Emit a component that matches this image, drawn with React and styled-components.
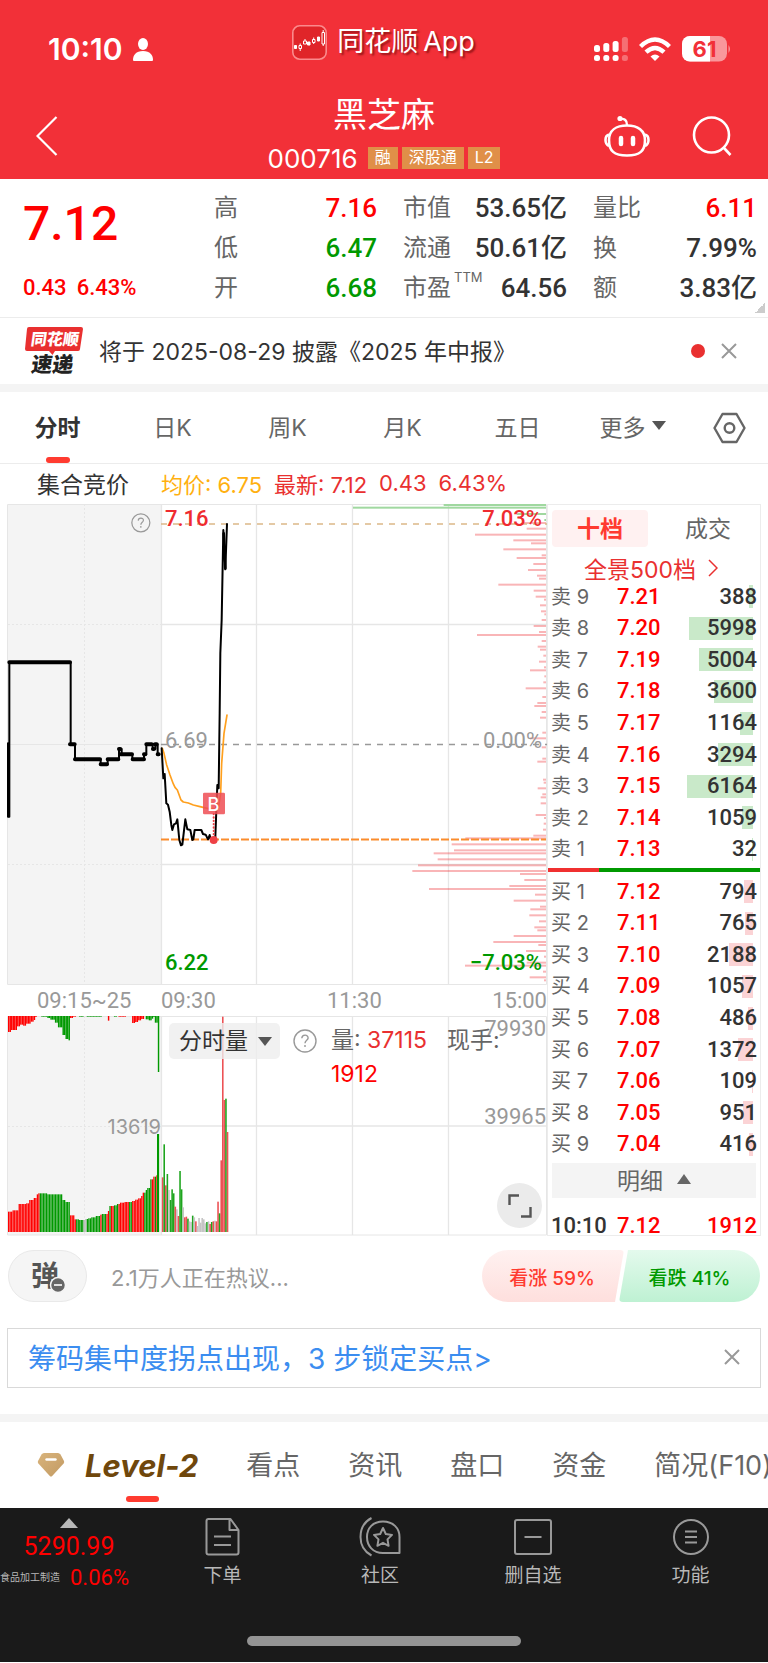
import React from "react";
import styled, { createGlobalStyle, css } from "styled-components";

const GlobalStyle = createGlobalStyle`
  * { box-sizing: border-box; }
  body { margin: 0; background: #fff; overflow-x: hidden; }
  button, select, a { font: inherit; color: inherit; text-decoration: none; }
  button, select { border: 0; background: none; padding: 0; margin: 0; cursor: pointer; white-space: nowrap; }
  svg { display: block; }
`;

const SANS = `Inter, "Noto Sans CJK SC", sans-serif`;
const NUM = `Roboto, "Noto Sans CJK SC", sans-serif`;

const C = {
  brand: "#f23038",
  up: "#ff0000",
  down: "#009900",
  soft: "#e93030",
  ink: "#333333",
  label: "#666666",
  mute: "#999999",
  line: "#ececec",
};
const tone = { up: C.up, down: C.down, ink: C.ink };

const Page = styled.div`
  font-family: ${SANS};
  color: ${C.ink};
  background: #fff;
  overflow: hidden;
`;

/* ---------- header ---------- */
const Header = styled.header`
  background: ${C.brand};
  color: #fff;
  height: 179px;
`;
const StatusBar = styled.div`
  display: grid;
  grid-template-columns: 1fr auto 1fr;
  height: 92px;
  padding: 0 37px 0 48px;
`;
const Clock = styled.div`
  display: flex;
  align-items: center;
  gap: 10px;
  height: 98px;
  font-size: 30px;
  font-weight: 600;
`;
const AppBadge = styled.div`
  display: flex;
  align-items: center;
  gap: 10px;
  height: 84px;
  padding-right: 12px;
  font-size: 27px;
  line-height: 36px;
  text-shadow: 2px 2px 2px rgba(90, 0, 0, 0.6);
`;
const AppName = styled.span`
  display: flex;
  gap: 5px;
`;
const Signals = styled.div`
  display: flex;
  align-items: center;
  justify-content: flex-end;
  gap: 11px;
  height: 98px;
`;
const TitleBar = styled.div`
  display: grid;
  grid-template-columns: 1fr auto 1fr;
  align-items: center;
  height: 87px;
  padding: 0 36px;
`;
const IconButton = styled.button`
  display: inline-flex;
  align-items: center;
  justify-content: center;
`;
const TitleActions = styled.div`
  display: flex;
  justify-content: flex-end;
  align-items: center;
  gap: 42px;
`;
const Back = styled.div`
  display: flex;
`;
const StockName = styled.div`
  text-align: center;
`;
const Name = styled.h1`
  margin: 0;
  font-size: 34px;
  line-height: 45px;
  font-weight: 400;
`;
const CodeRow = styled.div`
  display: flex;
  align-items: center;
  gap: 4px;
  height: 42px;
  font-size: 26px;
`;
const Code = styled.span`
  margin-right: 6px;
`;
const Tag = styled.span`
  background: #e08f48;
  font-size: 16px;
  line-height: 21px;
  height: 22px;
  padding: 0 7px;
`;

/* ---------- quote ---------- */
const Quote = styled.section`
  display: grid;
  grid-template-columns: 165fr 163fr 164fr 164fr;
  column-gap: 26px;
  height: 139px;
  padding: 9px 11px 0 23px;
  border-bottom: 1px solid ${C.line};
  background: linear-gradient(135deg, transparent 50%, #ccc 50%) no-repeat right 3px bottom 4px / 10px 10px;
`;
const PriceBox = styled.div`
  color: ${C.up};
  font-family: ${NUM};
  font-weight: 500;
`;
const BigPrice = styled.div`
  font-size: 48px;
  line-height: 72px;
`;
const Change = styled.div`
  display: flex;
  gap: 10px;
  font-size: 22px;
  line-height: 56px;
`;
const Stats = styled.dl`
  margin: 0;
`;
const Stat = styled.div`
  display: flex;
  justify-content: space-between;
  line-height: 40px;
  font-size: 24px;
`;
const StatLabel = styled.dt`
  color: ${C.label};
  white-space: nowrap;
`;
const Sup = styled.sup`
  font-size: 13px;
  line-height: 1;
  vertical-align: 14px;
  margin-left: 3px;
`;
const StatValue = styled.dd`
  margin: 0;
  font-family: ${NUM};
  font-weight: 500;
  font-size: 26px;
  color: ${(p) => tone[p.$tone]};
`;

/* ---------- news ---------- */
const News = styled.section`
  display: flex;
  align-items: center;
  height: 66px;
  padding: 0 31px 0 24px;
`;
const NewsText = styled.a`
  flex: 1;
  margin-left: 16px;
  padding-bottom: 3px;
  font-size: 23px;
  color: ${C.ink};
`;
const Dot = styled.span`
  width: 14px;
  height: 14px;
  border-radius: 50%;
  background: #e93030;
  margin-right: 16px;
`;
const Band = styled.div`
  height: 8px;
  background: #f4f4f4;
`;

/* ---------- period tabs ---------- */
const Periods = styled.nav`
  display: grid;
  grid-template-columns: repeat(6, 115fr) 78fr;
  justify-items: center;
  height: 72px;
  border-bottom: 1px solid ${C.line};
`;
const Tab = styled.button`
  display: flex;
  align-items: center;
  gap: 6px;
  position: relative;
  height: 100%;
  padding-bottom: 4px;
  font-size: ${(p) => (p.$big ? 27 : 23)}px;
  color: ${(p) => (p.$on ? C.ink : C.label)};
  font-weight: ${(p) => (p.$on ? 700 : 400)};
  ${(p) =>
    p.$on &&
    css`
      &::after {
        content: "";
        position: absolute;
        left: 50%;
        bottom: 0;
        width: 24px;
        height: 6px;
        margin-left: -12px;
        border-radius: 3px;
        background: #ff3b30;
      }
    `}
`;
const Caret = styled.span`
  border: 7px solid transparent;
  border-bottom-width: 0;
  border-top: 9px solid #555;
`;

const Info = styled.div`
  display: flex;
  align-items: center;
  height: 40px;
  padding: 0 0 2px 37px;
  font-size: 22px;
`;
const Auction = styled.span`
  width: 124px;
  font-size: 23px;
`;
const Metric = styled.span`
  color: ${(p) => p.$color};
  margin-right: 12px;
`;

/* ---------- charts ---------- */
const Market = styled.main`
  display: grid;
  grid-template-columns: minmax(0, 540fr) minmax(0, 214fr);
  padding: 0 7px;
`;
const Chart = styled.svg`
  width: 100%;
  height: auto;
  font-family: ${NUM};
`;
const ChartColumn = styled.div`
  min-width: 0;
`;
const Axis = styled.div`
  display: grid;
  grid-template-columns: 154fr 166fr 110fr 110fr;
  height: 31px;
  line-height: 32px;
  font-family: ${NUM};
  font-size: 22px;
  color: ${C.mute};
  span:first-child { padding-left: 30px; }
  span:last-child { text-align: right; }
`;
const Volume = styled.div`
  position: relative;
`;
const VolumeTools = styled.div`
  position: absolute;
  top: 7px;
  left: 162px;
  right: 0;
  display: flex;
  align-items: flex-start;
`;
const Picker = styled.label`
  display: flex;
  align-items: center;
  flex: none;
  width: 111px;
  height: 36px;
  padding-left: 10px;
  border-radius: 5px;
  background: rgba(238, 238, 238, 0.8);
  font-size: 23px;
  ${Caret} { margin-left: 10px; pointer-events: none; }
  select { appearance: none; width: 69px; height: 36px; color: ${C.ink}; font-size: 23px; }
`;
const HelpButton = styled(IconButton)`
  width: 26px;
  height: 36px;
  margin: 0 14px 0 13px;
`;
const Readings = styled.div`
  display: flex;
  flex-wrap: wrap;
  column-gap: 20px;
  font-size: 23px;
  line-height: 34px;
  color: ${C.label};
  b { font-weight: 400; color: ${C.soft}; }
  em { font-style: normal; color: ${C.up}; }
`;
const Expand = styled.button`
  position: absolute;
  right: 5px;
  bottom: 8px;
  width: 45px;
  height: 45px;
  border-radius: 50%;
  background: #ebebeb;
  display: flex;
  align-items: center;
  justify-content: center;
`;

/* ---------- order book ---------- */
const Book = styled.aside`
  display: flex;
  flex-direction: column;
  min-width: 0;
  border: 1px solid ${C.line};
  padding-top: 5px;
`;
const BookTabs = styled.div`
  display: grid;
  grid-template-columns: 96px 1fr;
  padding: 0 4px;
  gap: 12px;
`;
const BookTab = styled.button`
  height: 37px;
  padding-bottom: 4px;
  border-radius: 4px;
  font-size: 23px;
  color: ${(p) => (p.$on ? "#ff3b30" : C.label)};
  font-weight: ${(p) => (p.$on ? 700 : 400)};
  background: ${(p) => (p.$on ? "#fff1f1" : "transparent")};
`;
const FullBook = styled.a`
  display: flex;
  align-items: center;
  justify-content: center;
  gap: 12px;
  height: 34px;
  padding: 7px 6px 0 0;
  font-size: 23px;
  && { color: ${C.soft}; }
`;
const Levels = styled.table`
  display: flex;
  flex: ${(p) => (p.$last ? "none" : "1 1 0")};
  width: 100%;
  border-spacing: 0;
  tbody { display: flex; flex-direction: column; flex: 1; }
`;
const Level = styled.tr`
  flex: 1;
  display: grid;
  grid-template-columns: 66px 60px 1fr;
  align-items: center;
  padding: ${(p) => (p.$last ? "19px 3px 0" : "0 3px")};
  line-height: ${(p) => (p.$last ? 18 : 26)}px;
  font-family: ${NUM};
  font-size: 22px;
  font-weight: 500;
  th, td { padding: 0; text-align: left; }
`;
const Side = styled.th`
  font-family: ${SANS};
  font-size: 20px;
  font-weight: 400;
  color: ${C.label};
`;
const Time = styled.td`
  white-space: nowrap;
  color: ${C.ink};
`;
const Price = styled.td`
  color: ${C.up};
`;
const Qty = styled.td`
  && { text-align: right; }
  color: ${(p) => (p.$up ? C.up : C.ink)};
  background: linear-gradient(${(p) => p.$color || "transparent"} 0 0) no-repeat right 4px center / ${(p) => p.$bar || 0}px 23px;
`;
const Ratio = styled.div`
  height: 4px;
  margin: 3px 0 4px;
  background: linear-gradient(90deg, #f03030 24%, #009900 24%);
`;
const Detail = styled.button`
  display: flex;
  align-items: center;
  justify-content: center;
  gap: 14px;
  height: 35px;
  margin: 3px 4px 0;
  padding-bottom: 3px;
  background: #f4f4f4;
  color: ${C.label};
  font-size: 23px;
`;
const UpCaret = styled.span`
  border: ${(p) => p.$w || 7}px solid transparent;
  border-top-width: 0;
  border-bottom: 10px solid ${(p) => p.$color || "#666"};
`;

/* ---------- discussion ---------- */
const Talk = styled.section`
  display: flex;
  align-items: center;
  height: 92px;
  padding: 0 8px 12px;
`;
const Danmu = styled.button`
  width: 79px;
  height: 52px;
  border-radius: 26px;
  border: 1px solid #e9e9e9;
  background: #f5f5f5;
  display: flex;
  align-items: center;
  justify-content: center;
`;
const TalkText = styled.a`
  flex: 1;
  margin-left: 24px;
  font-size: 22px;
  && { color: ${C.mute}; }
`;
const Vote = styled.button`
  height: 52px;
  font-size: 19px;
  font-weight: 500;
  ${(p) =>
    p.$up
      ? css`
          width: 142px;
          padding-right: 2px;
          color: #ff3b30;
          border-radius: 26px 4px 4px 26px;
          background: linear-gradient(#fff1f0, #fedfdd);
          clip-path: polygon(0 0, 100% 0, calc(100% - 9px) 100%, 0 100%);
        `
      : css`
          width: 141px;
          margin-left: -5px;
          color: ${C.down};
          border-radius: 4px 26px 26px 4px;
          background: linear-gradient(#e4faed, #bef1d3);
          clip-path: polygon(9px 0, 100% 0, 100% 100%, 0 100%);
        `}
`;
const Promo = styled.section`
  display: flex;
  align-items: center;
  justify-content: space-between;
  height: 60px;
  margin: 0 7px 26px;
  padding: 0 20px 2px;
  border: 1px solid #d9d9d9;
`;
const PromoLink = styled.a`
  font-size: 28px;
  && { color: #3b8df0; }
`;

/* ---------- bottom ---------- */
const Sections = styled.nav`
  display: flex;
  align-items: center;
  height: 86px;
  padding-left: 37px;
  gap: 48px;
  white-space: nowrap;
`;
const LevelTab = styled.button`
  position: relative;
  display: flex;
  align-items: center;
  gap: 20px;
  height: 100%;
  font-size: 31px;
  font-weight: 700;
  font-style: italic;
  color: #6f470c;
  &::after {
    content: "";
    position: absolute;
    left: 89px;
    bottom: 6px;
    width: 33px;
    height: 6px;
    border-radius: 3px;
    background: #ff3b30;
  }
`;
const Footer = styled.footer`
  background: #1a1a1a;
  color: #b8b8b8;
  height: 154px;
`;
const Dock = styled.div`
  display: grid;
  grid-template-columns: 138fr 169fr 146fr 160fr 155fr;
  height: 128px;
`;
const Index = styled.a`
  display: flex;
  flex-direction: column;
  align-items: center;
  padding-top: 10px;
  font-family: ${NUM};
`;
const IndexValue = styled.span`
  color: ${C.up};
  font-size: 25px;
  line-height: 38px;
`;
const IndexRow = styled.span`
  display: flex;
  align-items: center;
  gap: 10px;
  width: 100%;
  font-size: 10px;
  line-height: 24px;
  white-space: nowrap;
  b { font-weight: 400; font-size: 22px; color: ${C.up}; }
`;
const DockItem = styled.button`
  display: flex;
  flex-direction: column;
  align-items: center;
  padding-top: 9px;
  font-size: 19px;
  line-height: 38px;
  svg { width: 42px; height: 40px; }
`;
const HomeBar = styled.div`
  width: 274px;
  height: 10px;
  margin: 0 auto;
  border-radius: 5px;
  background: #949494;
`;

/* ---------- icons ---------- */
const Cross = ({ size = 16 }) => (
  <svg width={size} height={size} viewBox="0 0 16 16" stroke="#999" strokeWidth="2" fill="none">
    <path d="M1 1 15 15M15 1 1 15" />
  </svg>
);
const Help = () => (
  <svg width="24" height="24" viewBox="0 0 24 24" fill="none" stroke="#999" strokeWidth="1.4">
    <circle cx="12" cy="12" r="11" />
    <path d="M8.8 9.3c.2-4.4 6.6-4 6.3-.2-.2 2.2-3.1 2.3-3.1 5.2M12 16v2" />
  </svg>
);
const Person = () => (
  <svg width="20" height="23" viewBox="0 0 20 23" fill="#fff">
    <ellipse cx="10" cy="6" rx="5" ry="6" />
    <path d="M0 22c0-5 3-9 10-9s10 4 10 9q0 1-1 1H1q-1 0-1-1Z" />
  </svg>
);
const AppIcon = () => (
  <svg width="35" height="35" viewBox="0 0 35 35">
    <rect x=".8" y=".8" width="33.4" height="33.4" rx="7" fill="#e02529" stroke="#fb8a8c" strokeWidth="1.6" />
    <g fill="#fff" stroke="#fff">
      <path d="M2.5 20.5h2v3h-2zM15.5 17h2.500v3h-2.500zM25.500 12h2v4h-2z" />
      <path fill="none" d="M7 20.500h2.500v3H7zM8.200 18.500v2M8.200 23.500v2.500M11.500 16h3v3h-3zM13 14v2M20.500 14.500h2.500v3h-2.500zM21.700 12.500v2M21.700 17.500v1.500M30 7.500h2.500V19H30zM31.200 5v2.500M31.200 19v2" />
    </g>
  </svg>
);
const Cells = () => (
  <svg width="34" height="24" viewBox="0 0 34 24" fill="#fff">
    {[8, 6, 4, 0].map((y, i) => (
      <g key={y} opacity={i === 3 ? 0.3 : 1}>
        <rect x={i * 9.3} y={y} width="6" height={15 - y} rx="2.500" />
        <rect x={i * 9.3} y="18" width="6" height="6" rx="2.500" />
      </g>
    ))}
  </svg>
);
const Wifi = () => (
  <svg width="32" height="25" viewBox="0 0 32 25" fill="none" stroke="#fff" strokeWidth="4.400">
    <path d="M1.500 9.500Q16-4.500 30.500 9.500" />
    <path d="M7 15.200q9-8.500 18 0" />
    <path d="M11.500 19.500q4.500-4 9 0L16 24Z" fill="#fff" stroke="none" />
  </svg>
);
const Battery = () => (
  <svg width="49" height="26" viewBox="0 0 49 26">
    <rect width="45" height="25.500" rx="8" fill="#f9979b" />
    <path d="M8 0h20v25.500H8a8 8 0 0 1-8-8V8a8 8 0 0 1 8-8Z" fill="#fff" />
    <path d="M46.500 9q3 4 0 8Z" fill="#f9979b" />
    <text x="22.500" y="20.500" textAnchor="middle" fontFamily="Inter, sans-serif" fontWeight="700" fontSize="22" fill="#f23038">61</text>
  </svg>
);
const BackIcon = () => (
  <svg width="22" height="40" viewBox="0 0 22 40" fill="none" stroke="#fff" strokeWidth="2.200">
    <path d="M20.500 1 1.500 20l19 19" />
  </svg>
);
const Robot = () => (
  <svg width="46" height="42" viewBox="0 0 46 42" fill="none" stroke="#fff" strokeWidth="2.600">
    <path d="M16 4q7-1 7 6" strokeWidth="2.400" />
    <circle cx="16" cy="3.500" r="2.600" fill="#fff" stroke="none" />
    <path d="M23 10.500c11 0 18 5 18 14.500 0 11-5 15.500-18 15.500S5 36 5 25c0-9.500 7-14.500 18-14.500Z" />
    <path d="M5 19.500Q1.500 20.500 1.500 25T5 31M41 19.500q3.500 1 3.500 5.500T41 31" />
    <path d="M17 23v6M29 23v6" strokeWidth="4.500" strokeLinecap="round" />
  </svg>
);
const Search = () => (
  <svg width="40" height="40" viewBox="0 0 40 40" fill="none" stroke="#fff" strokeWidth="2.600">
    <circle cx="19.500" cy="19" r="17.500" />
    <path d="m32 32 6.500 7" />
  </svg>
);
const Hexagon = () => (
  <svg width="33" height="32" viewBox="0 0 33 32" fill="none" stroke="#666" strokeWidth="2.400" strokeLinejoin="round">
    <path d="M9.500 2h14L31.500 16l-8 14h-14L1.500 16Z" />
    <circle cx="16.500" cy="16" r="4.800" />
  </svg>
);
const ExpressLogo = () => (
  <svg width="59" height="58" viewBox="0 -4 59 58" fontFamily='"Noto Sans CJK SC", sans-serif' fontWeight="900">
    <path d="M5 1h52q2 0 2 2l-3 20q0 2-2 2H31l-2.500 4-3.500-4H3q-2 0-2-2L3 3q0-2 2-2Z" fill="#e93030" />
    <text transform="skewX(-8)" x="9" y="19" fontSize="16" fill="#fff">同花顺</text>
    <text transform="skewX(-8)" x="13" y="46" fontSize="21" fill="#222">速递</text>
  </svg>
);
const DanmuIcon = () => (
  <svg width="38" height="48" viewBox="0 0 38 48">
    <text x="2" y="34" fontFamily='"Noto Sans CJK SC", sans-serif' fontWeight="700" fontSize="28" fill="#555">弹</text>
    <circle cx="29" cy="33" r="7.500" fill="#666" stroke="#f5f5f5" strokeWidth="1.500" />
    <path d="M25 33h8" stroke="#fff" strokeWidth="1.600" />
  </svg>
);
const Gem = () => (
  <svg width="28" height="26" viewBox="0 0 28 26">
    <defs>
      <linearGradient id="gem" x1="0" y1="0" x2="1" y2="1">
        <stop offset="0" stopColor="#d9b47c" />
        <stop offset="1" stopColor="#c29a63" />
      </linearGradient>
    </defs>
    <path d="M7 1h14q1.500 0 2.500 1.500L27 9q.6 1.200-.4 2.400L15.200 24q-1.200 1.200-2.400 0L1.400 11.400Q.4 10.200 1 9l3.500-6.500Q5.500 1 7 1Z" fill="url(#gem)" />
    <path d="M9.500 7.500h9" stroke="#fff" strokeWidth="2.400" strokeLinecap="round" />
  </svg>
);
const dockIcons = {
  order: <path d="M6.500 2h22l8 11v22.500q0 2-2 2h-28q-2 0-2-2V4q0-2 2-2ZM27.500 2v11h9M12 19.500h17M12 28h17" />,
  social: (
    <path d="M24 4.500c10 0 16.500 6.500 16.500 15.500v16H24C14 36 8 29 8 20S14 4.500 24 4.500ZM12.500 1C5 5 1.500 12 1.500 20S5 34.500 12.500 38.500M24 11l2.800 6 6.200.9-4.500 4.500 1.100 6.400-5.600-3-5.600 3 1.100-6.400L15 17.900l6.200-.9Z" />
  ),
  remove: <path d="M5 3h32q2 0 2 2v30q0 2-2 2H5q-2 0-2-2V5q0-2 2-2ZM12.500 20h17" />,
  more: (
    <>
      <circle cx="21" cy="20" r="17" />
      <path d="M15 14.500h12M15 20h12M15 25.500h12" />
    </>
  ),
};
const DockIcon = ({ name }) => (
  <svg viewBox="0 0 42 40" fill="none" stroke="#999" strokeWidth="2" strokeLinejoin="round">{dockIcons[name]}</svg>
);

/* ---------- data ---------- */
const stats = [
  [["高", "7.16", "up"], ["低", "6.47", "down"], ["开", "6.68", "down"]],
  [["市值", "53.65亿", "ink"], ["流通", "50.61亿", "ink"], ["市盈", "64.56", "ink", "TTM"]],
  [["量比", "6.11", "up"], ["换", "7.99%", "ink"], ["额", "3.83亿", "ink"]],
];
const asks = [
  ["9", "7.21", 388], ["8", "7.20", 5998], ["7", "7.19", 5004], ["6", "7.18", 3600], ["5", "7.17", 1164],
  ["4", "7.16", 3294], ["3", "7.15", 6164], ["2", "7.14", 1059], ["1", "7.13", 32],
];
const bids = [
  ["1", "7.12", 794], ["2", "7.11", 765], ["3", "7.10", 2188], ["4", "7.09", 1057], ["5", "7.08", 486],
  ["6", "7.07", 1372], ["7", "7.06", 109], ["8", "7.05", 951], ["9", "7.04", 416],
];

/* distribution of traded volume by price: [y, left edge] */
const profile = [
  [69, 760], [86, 770], [104, 615], [121, 730], [130, 783], [148, 700], [166, 815], [174, 740], [192, 790], [210, 774],
  [227, 801], [236, 807], [254, 685], [272, 791], [290, 797], [299, 822], [316, 810], [334, 813], [343, 823], [360, 815],
  [378, 791], [396, 807], [405, 621], [423, 815], [440, 803], [449, 810], [467, 820], [485, 807], [502, 822], [511, 780],
  [529, 823], [547, 820], [565, 767], [591, 817], [609, 802], [618, 793], [636, 815], [653, 810], [698, 817], [715, 780],
  [742, 815], [776, 817], [785, 802], [839, 819], [848, 821], [865, 803], [883, 817], [892, 812], [910, 812], [945, 797],
  [954, 822], [971, 821], [989, 819], [1007, 790], [1015, 586], [1033, 545], [1051, 552], [1060, 491], [1078, 503],
  [1096, 444], [1113, 427], [1122, 750], [1140, 763], [1158, 718], [1167, 477], [1184, 795], [1202, 731], [1220, 810],
  [1228, 781], [1246, 778], [1264, 807], [1282, 793], [1291, 802], [1308, 731], [1326, 670], [1335, 805], [1353, 768],
  [1370, 822], [1388, 770], [1397, 585], [1415, 819], [1432, 779], [1441, 822],
];
const asksProfile = [[15, 521], [23, 249], [42, 740], [60, 823]];

const stepAt = (table, x) => {
  let value = table[0][1];
  for (const [from, v] of table) if (x >= from) value = v;
  return value;
};
const R = "#ff0000";
const G = "#009900";
const N = "#bdbdbd";
const matched = [
  [22, 695], [34, 691], [52, 672], [74, 670], [86, 660], [98, 654], [106, 643], [112, 640], [140, 643], [187, 660],
  [195, 666], [208, 706], [221, 718], [234, 720], [252, 717], [262, 715], [270, 712], [284, 708], [297, 704], [303, 702],
  [320, 693], [327, 678], [340, 676], [350, 672], [358, 668], [370, 666], [392, 663], [403, 659], [411, 655], [420, 648],
  [426, 638], [433, 630], [440, 624], [450, 598], [457, 590], [465, 586], [471, 462],
];
const matchedColor = [
  [22, R], [117, G], [208, R], [226, G], [251, N], [258, G], [298, R], [305, G], [319, R], [326, G], [332, R], [340, G],
  [352, R], [387, G], [394, R], [429, G], [455, R], [462, G], [466, R], [471, G],
];
const unmatched = [
  [22, 156], [33, 150], [51, 139], [60, 134], [68, 137], [76, 131], [90, 125], [98, 120], [104, 111], [109, 108],
  [122, 110], [138, 114], [150, 119], [162, 128], [173, 142], [187, 165], [194, 177], [203, 181], [208, 114], [215, 110],
  [228, 108], [234, 110], [250, 108], [258, 110], [304, 108], [320, 122], [326, 108], [340, 110], [348, 108], [355, 110],
  [375, 108], [394, 129], [402, 126], [411, 121], [420, 117], [429, 108], [436, 118], [445, 121], [451, 116], [457, 111],
  [463, 128], [471, 276],
];
const unmatchedColor = [[22, R], [116, G], [208, R], [232, G], [318, R], [340, G], [352, R], [433, G]];
const auctionXs = Array.from({ length: 100 }, (_, i) => 24 + i * 4.54);

const minutes = [
  [592, R], [493, G], [616, R], [582, G], [630, N], [660, G], [628, G], [640, G], [680, R], [688, N], [708, R], [573, G],
  [628, G], [682, N], [712, R], [710, R], [716, G], [724, N], [726, N], [707, G], [712, N], [724, R], [738, N], [714, N],
  [728, N], [714, N], [718, N], [730, N], [726, G], [724, N], [732, R], [726, G], [724, R], [722, N], [724, R], [665, R],
  [700, G], [541, R], [110, R], [360, R], [356, G], [456, R],
];

const auctionLine =
  "M24 730V950H28V487H212V733H225V778H302V793H323V778H357V747H365V763H397V778H432V763H439V733H458V747H466V733H473V763H478";
const auctionFlats =
  "M28 487H210M210 733H224M225 778H300M302 793H321M323 778H355M357 747H361M362 763H396M398 778H432M432 763H436M439 733H455M459 747H462M465 733H470M473 763H476";
const priceLine =
  "M485 745 490 835 494 822 499 910 504 914 509 935 514 975 517 990 522 973 528 970 532 958 538 1020 543 1036 547 1034 556 958 562 988 571 990 577 1020 580 1018 584 990 604 990 609 1002 617 1004 624 1018 629 1005 632 1018H643L646 1012 649 930 652 855 656 865 659 640 661 460 665 360 670 90 676 208 681 72";
const avgLine =
  "M487 745 492 760 500 795 510 825 520 852 525 862 532 870 543 900 550 906 565 909 580 915 600 920 625 926 655 925 662 880 665 790 672 700 681 645";

const SCALE = "scale(.33333)";

function PriceChart() {
  return (
    <Chart viewBox="0 0 540 481" role="img" aria-label="分时走势">
      <rect x="1" y="0" width="153" height="481" fill="#f4f4f4" />
      <g stroke="#e6e6e6" fill="none">
        <path d="M154 120.500H540M154 360.500H540M249.500 0V481M345.500 0V481M441.500 0V481M154.500 0V481" strokeWidth="1.300" />
        <path d="M.5 .5H539.500V480.500H.5Z" />
        <path d="M1 120.500H154M1 360.500H154M77.500 0V481" strokeDasharray="2 2" />
        <path d="M1 240.500H154" />
      </g>
      <g transform={`translate(263 -4) ${SCALE}`}>
        {asksProfile.map(([y, x]) => <rect key={y} x={x} y={y - 3} width={828 - x} height="6" fill="#a0d8a0" />)}
        {profile.map(([y, x]) => <rect key={y} x={x} y={y - 3} width={828 - x} height="6" fill="#f03c41" opacity=".38" />)}
      </g>
      <path d="M154 20H540" stroke="#dcb888" strokeWidth="1.300" strokeDasharray="6 6" />
      <path d="M154 240.500H540" stroke="#999" strokeWidth="1.300" strokeDasharray="6 6" />
      <path d="M154 335.500H539" stroke="#fa8c2d" strokeWidth="2.200" strokeDasharray="8 2" />
      <g fontSize="22" fontWeight="500">
        <text x="158" y="22" fill="#ef2b30">7.16</text>
        <text x="535" y="22" fill="#ef2b30" textAnchor="end">7.03%</text>
        <g fill="#999" fontWeight="400">
          <text x="158" y="244">6.69</text>
          <text x="535" y="244" textAnchor="end">0.00%</text>
        </g>
        <text x="158" y="466" fill={G}>6.22</text>
        <text x="535" y="466" fill={G} textAnchor="end">−7.03%</text>
      </g>
      <g fill="none" stroke="#999" strokeWidth="1.500" transform="translate(124 9) scale(.82)">
        <circle cx="12" cy="12" r="11" />
        <path d="M8.800 9.300c.2-4.400 6.600-4 6.300-.2-.2 2.200-3.100 2.300-3.100 5.200M12 16v2" />
      </g>
      <g transform={`translate(-7 -4) ${SCALE}`} fill="none" strokeLinejoin="round" strokeLinecap="round">
        <path d={auctionLine} stroke="#000" strokeWidth="6" />
        <path d={auctionFlats} stroke="#000" strokeWidth="12" />
        <path d="M25 733V948" stroke="#000" strokeWidth="8" />
        <path d={avgLine} stroke="#ffa01e" strokeWidth="5" />
        <path d={priceLine} stroke="#000" strokeWidth="6" />
        <path d="M671 100 676 205" stroke="#000" strokeWidth="8" />
        <path d="M641 942V1015" stroke="#ee4045" strokeWidth="6" strokeDasharray="1 9" />
        <circle cx="641" cy="1020" r="12" fill="#ee4045" />
        <rect x="609" y="878" width="66" height="65" rx="4" fill="#ee4e54" opacity=".85" />
      </g>
      <text x="206.500" y="307" textAnchor="middle" fill="#fff" fontSize="18" fontWeight="500" fontFamily="Inter, sans-serif">B</text>
    </Chart>
  );
}

function VolumeChart() {
  return (
    <Chart viewBox="0 0 540 220" role="img" aria-label="分时成交量">
      <rect x="1" y="0" width="153" height="219" fill="#f4f4f4" />
      <g stroke="#e6e6e6" fill="none">
        <path d="M154 110H540M249.500 0V219M345.500 0V219M441.500 0V219M154.500 0V219" strokeWidth="1.300" />
        <path d="M.5 .5H539.500V219H.5Z" />
        <path d="M1 110.500H154M77.500 0V219" strokeDasharray="2 2" />
      </g>
      <g transform={`translate(-7 -36) ${SCALE}`}>
        {auctionXs.map((x) => {
          const top = stepAt(matched, x);
          return <rect key={x} x={x} y={top} width="3.900" height={756 - top} fill={stepAt(matchedColor, x)} />;
        })}
        {auctionXs.map((x) => (
          <rect key={x} x={x} y="108" width="4.300" height={stepAt(unmatched, x) - 108} fill={stepAt(unmatchedColor, x)} />
        ))}
        <rect x="471" y="462" width="5" height="294" fill={G} />
        {minutes.map(([top, color], i) => (
          <rect key={i} x={485.500 + i * 4.750} y={top} width="4.750" height={756 - top} fill={color === R ? "#e93a3e" : color} opacity=".88" />
        ))}
      </g>
      <g fill="#999" fontSize="22" textAnchor="end">
        <text x="539" y="20">79930</text>
        <text x="539" y="108">39965</text>
        <text x="154" y="118" fontSize="20" fontFamily="Inter, sans-serif">13619</text>
      </g>
    </Chart>
  );
}

function BookSide({ side, rows, color }) {
  return (
    <Levels>
      <tbody>
        {rows.map(([n, price, qty]) => (
          <Level key={n}>
            <Side scope="row">{side} {n}</Side>
            <Price>{price}</Price>
            <Qty $color={color} $bar={Math.max(1, Math.round(qty / 93))}>{qty}</Qty>
          </Level>
        ))}
      </tbody>
    </Levels>
  );
}

export default function App() {
  return (
    <Page>
      <GlobalStyle />
      <Header>
        <StatusBar>
          <Clock>10:10 <Person /></Clock>
          <AppBadge><AppIcon /><AppName><span>同花顺</span><span>App</span></AppName></AppBadge>
          <Signals><Cells /><Wifi /><Battery /></Signals>
        </StatusBar>
        <TitleBar>
          <Back><IconButton aria-label="返回"><BackIcon /></IconButton></Back>
          <StockName>
            <Name>黑芝麻</Name>
            <CodeRow><Code>000716</Code><Tag>融</Tag><Tag>深股通</Tag><Tag>L2</Tag></CodeRow>
          </StockName>
          <TitleActions>
            <IconButton aria-label="助手"><Robot /></IconButton>
            <IconButton aria-label="搜索"><Search /></IconButton>
          </TitleActions>
        </TitleBar>
      </Header>

      <Quote>
        <PriceBox>
          <BigPrice>7.12</BigPrice>
          <Change><span>0.43</span><span>6.43%</span></Change>
        </PriceBox>
        {stats.map((column) => (
          <Stats key={column[0][0]}>
            {column.map(([label, value, t, sup]) => (
              <Stat key={label}>
                <StatLabel>{label}{sup && <Sup>{sup}</Sup>}</StatLabel>
                <StatValue $tone={t}>{value}</StatValue>
              </Stat>
            ))}
          </Stats>
        ))}
      </Quote>

      <News>
        <ExpressLogo />
        <NewsText href="#news">将于 2025-08-29 披露《2025 年中报》</NewsText>
        <Dot />
        <IconButton aria-label="关闭消息"><Cross /></IconButton>
      </News>
      <Band />

      <Periods>
        <Tab $on>分时</Tab>
        <Tab>日K</Tab>
        <Tab>周K</Tab>
        <Tab>月K</Tab>
        <Tab>五日</Tab>
        <Tab>更多<Caret /></Tab>
        <IconButton aria-label="设置"><Hexagon /></IconButton>
      </Periods>
      <Info>
        <Auction>集合竞价</Auction>
        <Metric $color="#ffb010">均价: 6.75</Metric>
        <Metric $color={C.soft}>最新: 7.12</Metric>
        <Metric $color={C.soft}>0.43</Metric>
        <Metric $color={C.soft}>6.43%</Metric>
      </Info>

      <Market>
        <ChartColumn>
          <PriceChart />
          <Axis>
            <span>09:15~25</span>
            <span>09:30</span>
            <span>11:30</span>
            <span>15:00</span>
          </Axis>
          <Volume>
            <VolumeChart />
            <VolumeTools>
              <Picker>
                <select aria-label="副图指标" defaultValue="vol"><option value="vol">分时量</option></select>
                <Caret />
              </Picker>
              <HelpButton aria-label="指标说明"><Help /></HelpButton>
              <Readings>
                <span>量: <b>37115</b></span>
                <span>现手:</span>
                <em>1912</em>
              </Readings>
            </VolumeTools>
            <Expand aria-label="全屏">
              <svg width="24" height="24" viewBox="0 0 24 24" fill="none" stroke="#555" strokeWidth="2.400">
                <path d="M1.500 11V1.500H11M22.500 13v9.500H13" />
              </svg>
            </Expand>
          </Volume>
        </ChartColumn>

        <Book>
          <BookTabs>
            <BookTab $on>十档</BookTab>
            <BookTab>成交</BookTab>
          </BookTabs>
          <FullBook href="#book">
            全景500档
            <svg width="10" height="18" viewBox="0 0 10 18" fill="none" stroke="#e93030" strokeWidth="1.500"><path d="m1 1 8 8-8 8" /></svg>
          </FullBook>
          <BookSide side="卖" rows={asks} color="#c9e9c9" />
          <Ratio />
          <BookSide side="买" rows={bids} color="#fbd3d5" />
          <Detail>明细 <UpCaret /></Detail>
          <Levels $last>
            <tbody>
              <Level $last><Time>10:10</Time><Price>7.12</Price><Qty $up>1912</Qty></Level>
            </tbody>
          </Levels>
        </Book>
      </Market>

      <Talk>
        <Danmu aria-label="弹幕"><DanmuIcon /></Danmu>
        <TalkText href="#talk">2.1万人正在热议...</TalkText>
        <Vote $up>看涨 59%</Vote>
        <Vote>看跌 41%</Vote>
      </Talk>
      <Promo>
        <PromoLink href="#promo">筹码集中度拐点出现，3 步锁定买点&gt;</PromoLink>
        <IconButton aria-label="关闭推广"><Cross /></IconButton>
      </Promo>
      <Band />

      <Sections>
        <LevelTab><Gem />Level-2</LevelTab>
        <Tab $big>看点</Tab>
        <Tab $big>资讯</Tab>
        <Tab $big>盘口</Tab>
        <Tab $big>资金</Tab>
        <Tab $big>简况(F10)</Tab>
      </Sections>

      <Footer>
        <Dock>
          <Index href="#index">
            <UpCaret $w={9} $color="#b8b8b8" />
            <IndexValue>5290.99</IndexValue>
            <IndexRow>食品加工制造 <b>0.06%</b></IndexRow>
          </Index>
          <DockItem><DockIcon name="order" />下单</DockItem>
          <DockItem><DockIcon name="social" />社区</DockItem>
          <DockItem><DockIcon name="remove" />删自选</DockItem>
          <DockItem><DockIcon name="more" />功能</DockItem>
        </Dock>
        <HomeBar />
      </Footer>
    </Page>
  );
}
